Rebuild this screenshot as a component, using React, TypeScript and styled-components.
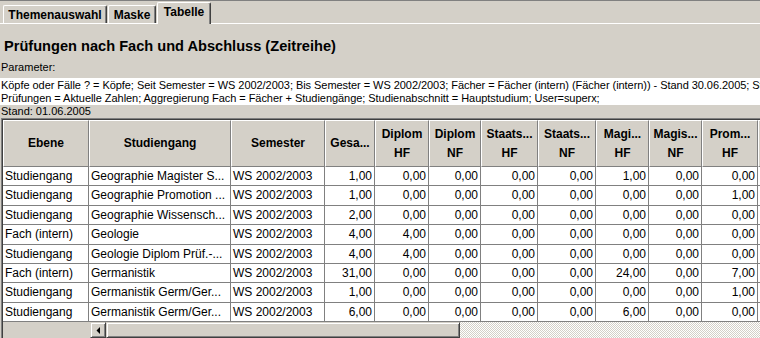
import React, { FC } from "react";
import styled, { createGlobalStyle } from "styled-components";

const GlobalStyle = createGlobalStyle`
    html, body {
        margin: 0;
        padding: 0;
        background: #d4d0c8;
        overflow: hidden;
    }
    * {
        box-sizing: border-box;
    }
`;

const FACE = "#d4d0c8";
const SHADOW = "#808080";
const DARK = "#404040";

const Page = styled.div`
    width: 760px;
    height: 338px;
    display: flex;
    flex-direction: column;
    background: ${FACE};
    font-family: "Liberation Sans", Arial, sans-serif;
    color: #000;
    overflow: hidden;
`;

const TabStrip = styled.div`
    height: 24px;
    flex: none;
    border-top: 1px solid ${SHADOW};
    border-bottom: 1px solid #fff;
    display: flex;
    align-items: flex-end;
    padding-left: 3px;
`;

const Tab = styled.div<{ $active?: boolean; $width: number }>`
    width: ${(p) => p.$width}px;
    height: ${(p) => (p.$active ? 22 : 18)}px;
    margin-bottom: ${(p) => (p.$active ? -1 : 0)}px;
    margin-right: ${(p) => (p.$active ? 0 : 1)}px;
    background: ${FACE};
    border-top: 1px solid #fff;
    border-left: 1px solid #fff;
    border-right: 1px solid ${DARK};
    box-shadow: inset -1px 0 0 ${SHADOW};
    border-radius: 2px 2px 0 0;
    font-size: 12px;
    font-weight: bold;
    display: flex;
    align-items: ${(p) => (p.$active ? "flex-start" : "center")};
    padding-top: ${(p) => (p.$active ? 2 : 0)}px;
    justify-content: center;
    position: relative;
    z-index: ${(p) => (p.$active ? 1 : 0)};
`;

const Title = styled.div`
    height: 24px;
    margin-top: 10px;
    padding-left: 4px;
    font-size: 14.6px;
    font-weight: bold;
    line-height: 24px;
    white-space: nowrap;
`;

const Caption = styled.div`
    height: 18px;
    padding-left: 1px;
    font-size: 11px;
    line-height: 18px;
    white-space: nowrap;
`;

const ParamBox = styled.div`
    margin-top: 2px;
    height: 27px;
    padding-top: 1px;
    background: #fff;
    overflow: hidden;
`;

const ParamLine = styled.div`
    height: 13px;
    padding-left: 1px;
    font-size: 11px;
    line-height: 13px;
    letter-spacing: -0.05px;
    white-space: nowrap;
`;

const Stand = styled.div`
    height: 13px;
    padding-left: 1px;
    font-size: 11px;
    line-height: 13px;
    white-space: nowrap;
`;

const Pane = styled.div`
    flex: 1;
    margin-left: 1px;
    border-top: 1px solid ${SHADOW};
    border-left: 1px solid ${SHADOW};
    box-shadow: inset 1px 1px 0 ${DARK};
    padding: 1px 0 0 1px;
    display: flex;
    flex-direction: column;
    overflow: hidden;
    min-height: 0;
`;

const COLS = [86, 142, 94, 50, 54, 52, 57, 58, 53, 53, 56, 60];
const TEMPLATE = COLS.map((c) => `${c}px`).join(" ");

const HeaderRow = styled.div`
    display: grid;
    grid-template-columns: ${TEMPLATE};
    height: 47px;
    flex: none;
`;

const HeadCell = styled.div`
    background: ${FACE};
    border-top: 1px solid #fff;
    border-left: 1px solid #fff;
    border-right: 1px solid ${SHADOW};
    border-bottom: 1px solid ${SHADOW};
    display: flex;
    flex-direction: column;
    align-items: center;
    justify-content: center;
    font-size: 12px;
    font-weight: bold;
    line-height: 19px;
    white-space: nowrap;
    overflow: hidden;
`;

const Rows = styled.div`
    flex: 1;
    min-height: 0;
    overflow: hidden;
`;

const Row = styled.div`
    display: grid;
    grid-template-columns: ${TEMPLATE};
    height: 19.4px;
`;

const Cell = styled.div<{ $right?: boolean }>`
    background: #fff;
    border-right: 1px solid ${SHADOW};
    border-bottom: 1px solid ${SHADOW};
    padding: 0 2px 0 2px;
    font-size: 12px;
    line-height: 18px;
    text-align: ${(p) => (p.$right ? "right" : "left")};
    white-space: nowrap;
    overflow: hidden;
`;

const ScrollRow = styled.div`
    height: 16px;
    flex: none;
    display: flex;
`;

const Corner = styled.div`
    width: 87px;
    flex: none;
`;

const Raised = styled.div`
    background: ${FACE};
    border-top: 1px solid ${FACE};
    border-left: 1px solid ${FACE};
    border-right: 1px solid ${DARK};
    border-bottom: 1px solid ${DARK};
    box-shadow: inset 1px 1px 0 #fff, inset -1px -1px 0 ${SHADOW};
    flex: none;
`;

const ArrowButton = styled(Raised)`
    width: 16px;
    height: 16px;
    display: flex;
    align-items: center;
    justify-content: center;
`;

const Thumb = styled(Raised)<{ $width: number }>`
    width: ${(p) => p.$width}px;
    height: 16px;
`;

const Track = styled.div`
    flex: 1;
    height: 16px;
    background: repeating-conic-gradient(#fff 0 25%, ${FACE} 0 50%) 0 0 / 2px 2px;
`;

const headers: string[][] = [
    ["Ebene"],
    ["Studiengang"],
    ["Semester"],
    ["Gesa..."],
    ["Diplom", "HF"],
    ["Diplom", "NF"],
    ["Staats...", "HF"],
    ["Staats...", "NF"],
    ["Magi...", "HF"],
    ["Magis...", "NF"],
    ["Prom...", "HF"],
    ["Prom...", "NF"],
];

const rows: string[][] = [
    ["Studiengang", "Geographie Magister S...", "WS 2002/2003", "1,00", "0,00", "0,00", "0,00", "0,00", "1,00", "0,00", "0,00", "0,00"],
    ["Studiengang", "Geographie Promotion ...", "WS 2002/2003", "1,00", "0,00", "0,00", "0,00", "0,00", "0,00", "0,00", "1,00", "0,00"],
    ["Studiengang", "Geographie Wissensch...", "WS 2002/2003", "2,00", "0,00", "0,00", "0,00", "0,00", "0,00", "0,00", "0,00", "0,00"],
    ["Fach (intern)", "Geologie", "WS 2002/2003", "4,00", "4,00", "0,00", "0,00", "0,00", "0,00", "0,00", "0,00", "0,00"],
    ["Studiengang", "Geologie Diplom Prüf.-...", "WS 2002/2003", "4,00", "4,00", "0,00", "0,00", "0,00", "0,00", "0,00", "0,00", "0,00"],
    ["Fach (intern)", "Germanistik", "WS 2002/2003", "31,00", "0,00", "0,00", "0,00", "0,00", "24,00", "0,00", "7,00", "0,00"],
    ["Studiengang", "Germanistik Germ/Ger...", "WS 2002/2003", "1,00", "0,00", "0,00", "0,00", "0,00", "0,00", "0,00", "1,00", "0,00"],
    ["Studiengang", "Germanistik Germ/Ger...", "WS 2002/2003", "6,00", "0,00", "0,00", "0,00", "0,00", "6,00", "0,00", "0,00", "0,00"],
];

const App: FC = () => {
    return (
        <Page>
            <GlobalStyle />
            <TabStrip>
                <Tab $width={104}>Themenauswahl</Tab>
                <Tab $width={48}>Maske</Tab>
                <Tab $width={54} $active>Tabelle</Tab>
            </TabStrip>
            <Title>Prüfungen nach Fach und Abschluss (Zeitreihe)</Title>
            <Caption>Parameter:</Caption>
            <ParamBox>
                <ParamLine>
                    Köpfe oder Fälle ? = Köpfe; Seit Semester = WS 2002/2003; Bis Semester = WS 2002/2003; Fächer = Fächer (intern) (Fächer (intern)) - Stand 30.06.2005; Stichtag = Amtliche Statistik;
                </ParamLine>
                <ParamLine>
                    Prüfungen = Aktuelle Zahlen; Aggregierung Fach = Fächer + Studiengänge; Studienabschnitt = Hauptstudium; User=superx;
                </ParamLine>
            </ParamBox>
            <Stand>Stand: 01.06.2005</Stand>
            <Pane>
                <HeaderRow>
                    {headers.map((h, i) => (
                        <HeadCell key={i}>
                            {h.map((line, j) => (
                                <span key={j}>{line}</span>
                            ))}
                        </HeadCell>
                    ))}
                </HeaderRow>
                <Rows>
                    {rows.map((r, i) => (
                        <Row key={i}>
                            {r.map((v, j) => (
                                <Cell key={j} $right={j > 2}>
                                    {v}
                                </Cell>
                            ))}
                        </Row>
                    ))}
                </Rows>
                <ScrollRow>
                    <Corner />
                    <ArrowButton>
                        <svg width="4" height="7" viewBox="0 0 4 7">
                            <path d="M4 0 L4 7 L0.5 3.5 Z" fill="#000" />
                        </svg>
                    </ArrowButton>
                    <Thumb $width={354} />
                    <Track />
                </ScrollRow>
            </Pane>
        </Page>
    );
};

export default App;
